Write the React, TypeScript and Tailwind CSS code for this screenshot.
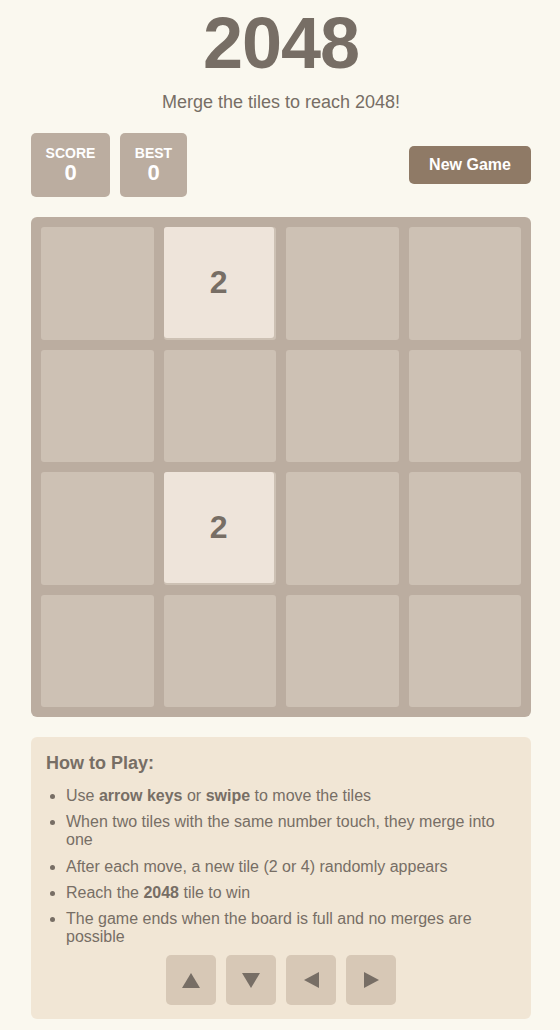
import React from "react";

const board: number[][] = [
  [0, 2, 0, 0],
  [0, 0, 0, 0],
  [0, 2, 0, 0],
  [0, 0, 0, 0],
];

function Arrow({ dir }: { dir: "up" | "down" | "left" | "right" }) {
  const pts: Record<string, string> = {
    up: "9,0 18,15 0,15",
    down: "0,0 18,0 9,15",
    left: "15,0 15,16 0,8",
    right: "0,0 15,8 0,16",
  };
  const w = dir === "up" || dir === "down" ? 18 : 15;
  const h = dir === "up" || dir === "down" ? 15 : 16;
  return (
    <button className="w-[50px] h-[50px] rounded-[5px] bg-[#d7c8b6] flex items-center justify-center">
      <svg width={w} height={h} viewBox={`0 0 ${w} ${h}`}>
        <polygon points={pts[dir]} fill="#776e65" />
      </svg>
    </button>
  );
}

export default function App() {
  return (
    <div className="min-h-[1030px] bg-[#faf8ef] text-[#776e65] font-['Liberation_Sans',Arial,sans-serif]">
      <div className="w-[500px] ml-[31px] pt-[7px]">
        <h1 className="text-[72px] leading-[72px] font-bold text-center tracking-[-1px]">2048</h1>
        <p className="mt-[11px] text-[18px] leading-[24px] text-center">Merge the tiles to reach 2048!</p>

        <div className="mt-[19px] flex items-center justify-between">
          <div className="flex gap-[10px]">
            <div className="bg-[#bbada0] rounded-[5px] w-[79px] h-[64px] flex flex-col items-center pt-[12px] text-white font-bold">
              <div className="text-[14px] leading-[16px]">SCORE</div>
              <div className="text-[22px] leading-[24px]">0</div>
            </div>
            <div className="bg-[#bbada0] rounded-[5px] w-[67px] h-[64px] flex flex-col items-center pt-[12px] text-white font-bold">
              <div className="text-[14px] leading-[16px]">BEST</div>
              <div className="text-[22px] leading-[24px]">0</div>
            </div>
          </div>
          <button className="bg-[#8f7a66] text-white font-bold text-[16px] rounded-[5px] w-[122px] h-[38px]">
            New Game
          </button>
        </div>

        <div className="mt-[20px] bg-[#bbada0] rounded-[6px] p-[10px] w-[500px] h-[500px] grid grid-cols-4 grid-rows-4 gap-[10px]">
          {board.flat().map((v, i) => (
            <div key={i} className="bg-[#cdc1b4] rounded-[3px]">
              {v !== 0 && (
                <div className="w-[calc(100%-2px)] h-[calc(100%-2px)] bg-[#eee4da] rounded-[3px] flex items-center justify-center text-[32px] font-bold text-[#776e65]">
                  {v}
                </div>
              )}
            </div>
          ))}
        </div>

        <div className="mt-[20px] bg-[#f1e6d5] rounded-[6px] px-[15px] pt-[15px] pb-[14px]">
          <h2 className="text-[18px] leading-[22px] font-bold">How to Play:</h2>
          <ul className="mt-[13px] list-disc pl-[20px] text-[16px] leading-[18px]">
            <li className="mb-[8.25px]">
              Use <b>arrow keys</b> or <b>swipe</b> to move the tiles
            </li>
            <li className="mb-[8.25px]">When two tiles with the same number touch, they merge into one</li>
            <li className="mb-[8.25px]">After each move, a new tile (2 or 4) randomly appears</li>
            <li className="mb-[8.25px]">
              Reach the <b>2048</b> tile to win
            </li>
            <li>The game ends when the board is full and no merges are possible</li>
          </ul>
          <div className="mt-[9px] flex justify-center gap-[10px]">
            <Arrow dir="up" />
            <Arrow dir="down" />
            <Arrow dir="left" />
            <Arrow dir="right" />
          </div>
        </div>
      </div>
    </div>
  );
}
